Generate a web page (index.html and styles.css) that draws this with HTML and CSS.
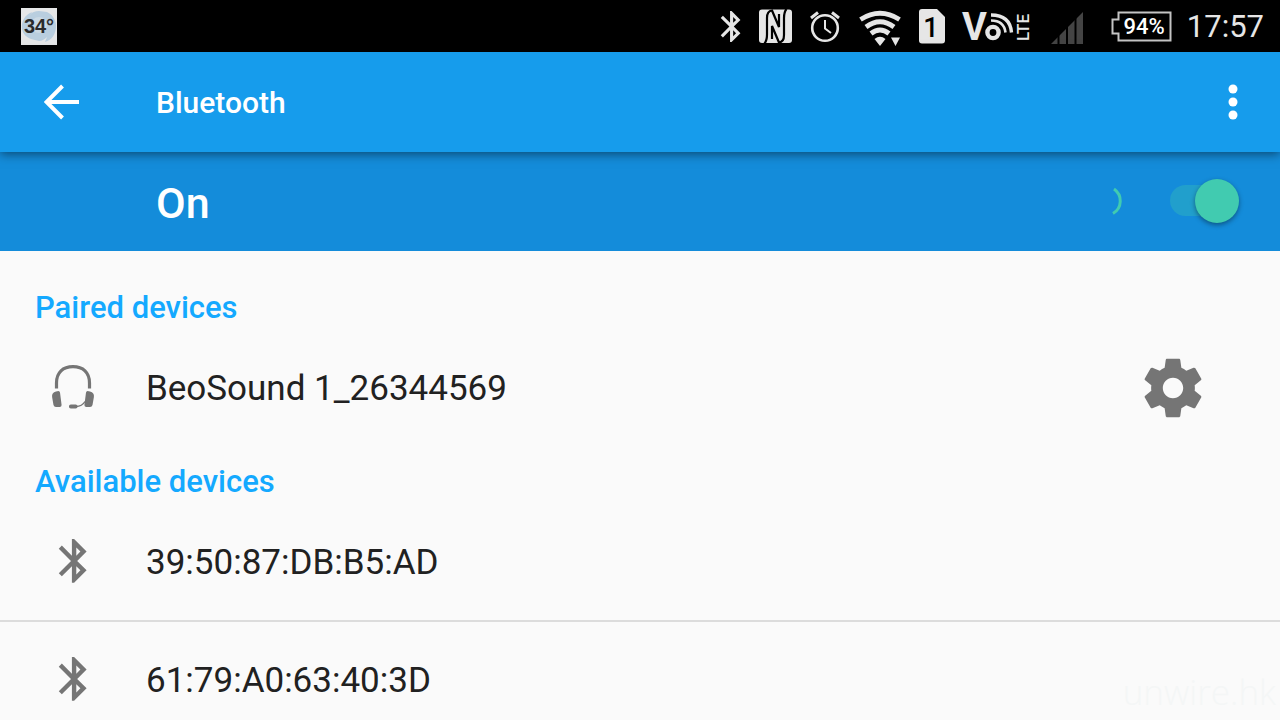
FILE: index.html
```html
<!DOCTYPE html>
<html lang="en">
<head>
<meta charset="utf-8">
<meta name="viewport" content="width=device-width, initial-scale=1">
<title>Bluetooth</title>
<link rel="stylesheet" href="styles.css">
</head>
<body>
<svg class="defs" aria-hidden="true">
  <path id="bluetooth" fill="currentColor" d="M17.710 7.710L12 2h-1v7.590L6.410 5 5 6.410 10.590 12 5 17.590 6.410 19 11 14.410V22h1l5.710-5.710L13.410 12l4.300-4.290zM13 5.830l1.880 1.880L13 9.590V5.830zm1.880 10.460L13 18.170v-3.760l1.880 1.880z"/>
</svg>
<div class="app">
  <div class="status">
    <svg class="weather" width="36" height="37" viewBox="0 0 36 37" role="img" aria-label="34 degrees">
      <rect width="36" height="37" fill="#e6e7e8"/>
      <path d="M11 4C4 7 0 13 1 21c1 5 4 8 9 10l8 2c3 0 6-2 8-4l-2 5c7-2 11-8 11-16 0-6-3-11-9-14l-8-1c-4 0-7 1-9 4l2-3z" fill="#b9cedf"/>
      <circle cx="18" cy="17" r="8" fill="#cbd9e4"/>
      <path d="M28 4q4 3 6 8V4zM2 25q3 6 8 8H2z" fill="#e6e7e8"/>
      <text x="18" y="25" text-anchor="middle" class="weather-text">34°</text>
    </svg>
    <div class="status-icons">
      <svg width="38" height="52" viewBox="0 0 38 52" aria-label="Bluetooth">
        <use href="#bluetooth" transform="translate(1 8) scale(1.550)"/>
      </svg>
      <svg width="50" height="52" viewBox="0 0 50 52" aria-label="NFC">
        <rect x="9" y="9.500" width="33" height="33.500" rx="3" fill="#e6e6e6"/>
        <path d="M14.500 43.500q2.500-3 2.500-9V18q0-7 5-7.500L29 27V14M36.500 9q-2.500 3-2.500 9v17q0 7-5 7.500L22 26v13" fill="none" stroke="#000" stroke-width="2.200"/>
      </svg>
      <svg width="50" height="52" viewBox="0 0 50 52" aria-label="Alarm">
        <g fill="none" stroke="#e6e6e6">
          <circle cx="25" cy="28" r="12.800" stroke-width="2.600"/>
          <path d="M25 20v8.500l6 4.500" stroke-width="2"/>
          <path d="M11 18l7-5.500M39 18l-7-5.500" stroke-width="3"/>
        </g>
      </svg>
      <svg width="60" height="52" viewBox="0 0 60 52" aria-label="Wi-Fi">
        <g fill="none" stroke="#e6e6e6" stroke-width="4.800">
          <path d="M10.500 19.500Q30 7 49.500 19.500"/>
          <path d="M16 27Q30 16.500 44 27"/>
          <path d="M21 33.500Q30 26.500 39 33.500"/>
        </g>
        <path d="M24.500 39Q30 34.500 35.500 39L30 46zM41 37.500h9L45.500 46z" fill="#e6e6e6"/>
      </svg>
      <svg width="44" height="52" viewBox="0 0 44 52" aria-label="SIM 1">
        <path d="M12 9h15l8 8v23.500q0 3-3 3H12q-3 0-3-3V12q0-3 3-3z" fill="#e6e6e6"/>
        <text x="21" y="37" text-anchor="middle" class="sim-text">1</text>
      </svg>
      <svg width="86" height="52" viewBox="0 0 86 52" aria-label="VoLTE">
        <text x="8" y="40" class="volte-v">V</text>
        <g fill="none" stroke="#e6e6e6">
          <circle cx="39" cy="32.500" r="5.600" stroke-width="4.400"/>
          <path d="M37 20.500q13 0 14.500 12" stroke-width="2.600"/>
          <path d="M37 15q19 0 20.500 17.500" stroke-width="3.400"/>
        </g>
        <text transform="translate(75 41) rotate(-90)" class="volte-lte">LTE</text>
      </svg>
      <svg width="58" height="52" viewBox="0 0 58 52" aria-label="Mobile signal">
        <path d="M11 44 43 12v32z" fill="#444"/>
        <path d="M35.500 12v32M27 12v32M18.500 12v32" stroke="#000" stroke-width="2"/>
      </svg>
      <svg width="82" height="52" viewBox="0 0 82 52" aria-label="Battery 94%">
        <path d="M20.500 12.500h52v28h-52v-7h-6v-14h6z" fill="none" stroke="#c4c4c4" stroke-width="2"/>
        <text x="46" y="34" text-anchor="middle" class="battery-text">94%</text>
      </svg>
      <time class="clock">17:57</time>
    </div>
  </div>

  <header class="appbar">
    <button class="back" aria-label="Back">
      <svg width="36" height="36" viewBox="0 0 36 36"><path d="M35 18H3M18.500 2 2.500 18l16 16" fill="none" stroke="#fff" stroke-width="4"/></svg>
    </button>
    <h1 class="title">Bluetooth</h1>
    <button class="more" aria-label="More options">
      <svg width="10" height="36" viewBox="0 0 10 36" fill="#fff"><circle cx="5" cy="5" r="4.500"/><circle cx="5" cy="18" r="4.500"/><circle cx="5" cy="31" r="4.500"/></svg>
    </button>
  </header>

  <div class="power">
    <label class="power-label" for="bt-switch">On</label>
    <svg class="spinner" width="32" height="32" viewBox="0 0 32 32" aria-label="Scanning"><path d="M23 4a14.500 14.500 0 0 1-1 24.500" fill="none" stroke="#41cbb0" stroke-width="3"/></svg>
    <input class="switch" id="bt-switch" type="checkbox" role="switch" checked>
  </div>

  <main class="content">
    <section>
      <h2 class="heading">Paired devices</h2>
      <ul class="devices">
        <li class="device">
          <svg class="device-icon" width="46" height="46" viewBox="0 0 46 46" fill="#757575">
            <path d="M6.500 23.500V18C6.500 7.500 13 1.700 23 1.700S39.500 7.500 39.500 18v5.500" fill="none" stroke="#757575" stroke-width="3.200"/>
            <path d="M6 26.500l2.500-.5q1.200 0 1.500 1.500l1.600 12.500q0 2-2 2H6q-2 0-2.500-2L2.100 32q-.6-4.500 3.900-5.500zM40 26.500l-2.500-.5q-1.200 0-1.500 1.500L34.400 40q0 2 2 2H40q2 0 2.500-2L43.900 32q.6-4.500-3.900-5.500z"/>
            <rect x="19" y="39.500" width="8.500" height="4" rx="1.800"/>
            <path d="M26 41.500q6 0 9-5" fill="none" stroke="#757575" stroke-width="1.400"/>
          </svg>
          <span class="device-name">BeoSound 1_26344569</span>
          <button class="settings" aria-label="Device settings">
            <svg width="70" height="70" viewBox="0 0 24 24" fill="#757575"><path d="M19.430 12.980c.04-.32.07-.64.07-.98s-.03-.66-.07-.98l2.110-1.650c.19-.15.24-.42.12-.64l-2-3.460c-.12-.22-.39-.3-.61-.22l-2.490 1c-.52-.4-1.080-.73-1.690-.98l-.38-2.650C14.460 2.180 14.250 2 14 2h-4c-.25 0-.46.18-.49.42l-.38 2.650c-.61.25-1.170.59-1.690.98l-2.490-1c-.23-.09-.49 0-.61.22l-2 3.460c-.13.22-.07.49.12.64l2.110 1.650c-.04.32-.07.65-.07.98s.03.66.07.98l-2.110 1.650c-.19.15-.24.42-.12.64l2 3.460c.12.22.39.3.61.22l2.490-1c.52.4 1.080.73 1.690.98l.38 2.650c.03.24.24.42.49.42h4c.25 0 .46-.18.49-.42l.38-2.650c.61-.25 1.170-.59 1.690-.98l2.490 1c.23.09.49 0 .61-.22l2-3.460c.12-.22.07-.49-.12-.64l-2.110-1.650zM12 15.500c-1.930 0-3.500-1.570-3.500-3.500s1.570-3.500 3.500-3.500 3.500 1.570 3.500 3.500-1.570 3.500-3.500 3.500z"/></svg>
          </button>
        </li>
      </ul>
    </section>
    <section>
      <h2 class="heading">Available devices</h2>
      <ul class="devices">
        <li class="device">
          <svg class="device-icon" width="46" height="46" viewBox="1 2 21 21"><use href="#bluetooth"/></svg>
          <span class="device-name">39:50:87:DB:B5:AD</span>
        </li>
        <li class="device">
          <svg class="device-icon" width="46" height="46" viewBox="1 2 21 21"><use href="#bluetooth"/></svg>
          <span class="device-name">61:79:A0:63:40:3D</span>
        </li>
      </ul>
    </section>
  </main>
  <div class="watermark">unwire.hk</div>
</div>
</body>
</html>
```
FILE: styles.css
```css
* { box-sizing: border-box; }

body {
  margin: 0;
  background: #fafafa;
  color: #212121;
  font-family: Roboto, "Liberation Sans", sans-serif;
}

.defs { position: absolute; width: 0; height: 0; }

.app {
  position: relative;
  display: flex;
  flex-direction: column;
  height: 100vh;
  overflow: hidden;
}

button {
  display: flex;
  padding: 0;
  border: 0;
  background: none;
  cursor: pointer;
}

/* Status bar */
.status {
  display: flex;
  flex: none;
  align-items: center;
  justify-content: space-between;
  height: 52px;
  padding: 0 16px 0 21px;
  background: #000;
}
.status-icons { display: flex; align-items: center; color: #e6e6e6; }
.weather-text { font: bold 20px "Liberation Sans", sans-serif; fill: #2b2b2b; }
.sim-text { font-size: 27px; font-weight: 500; fill: #000; }
.volte-v { font-size: 38px; font-weight: 700; fill: #e6e6e6; }
.volte-lte { font-size: 17px; font-weight: 500; fill: #e6e6e6; }
.battery-text { font-size: 22px; font-weight: 500; fill: #fff; }
.clock { padding-left: 7px; font-size: 31px; line-height: 52px; padding-top: 2px; }

/* App bar */
.appbar {
  position: relative;
  z-index: 1;
  display: flex;
  flex: none;
  align-items: center;
  height: 100px;
  padding: 0 42px 0 44px;
  background: #169cec;
  box-shadow: 0 2px 10px rgba(0, 0, 0, 0.5);
}
.back { width: 112px; }
.title { flex: 1; margin: 0; padding-top: 2px; font-size: 30px; font-weight: 500; line-height: 40px; color: #fff; }

/* Power row */
.power {
  display: flex;
  flex: none;
  align-items: center;
  height: 99px;
  padding: 0 41px 2px 156px;
  background: #148cda;
}
.power-label { flex: 1; padding-top: 4px; font-size: 43px; font-weight: 500; line-height: 56px; color: #fff; }
.spinner { margin-right: 47px; }
.switch {
  position: relative;
  width: 69px;
  height: 44px;
  margin: 0;
  appearance: none;
  cursor: pointer;
}
.switch::before {
  content: "";
  position: absolute;
  inset: 6px 8px 7px 0;
  border-radius: 16px;
  background: #219fcc;
}
.switch::after {
  content: "";
  position: absolute;
  top: 0;
  right: 0;
  width: 44px;
  height: 44px;
  border-radius: 50%;
  background: #41cbb0;
  box-shadow: 0 2px 5px rgba(0, 0, 0, 0.4);
}
.switch:not(:checked)::after { right: auto; left: 0; background: #fafafa; }

/* Device lists */
.content { flex: 1; min-height: 0; padding-top: 21px; overflow: hidden; }
.heading {
  margin: 0;
  padding: 16px 35px 2px;
  font-size: 31px;
  font-weight: 500;
  line-height: 40px;
  color: #14a9ff;
}
.devices { margin: 0; padding: 0; list-style: none; }
.device {
  display: flex;
  align-items: center;
  height: 116px;
  padding: 0 72px 0 50px;
}
.device + .device { height: 118px; border-top: 2px solid #dcdcdc; }
.device-icon { flex: none; margin-right: 50px; color: #757575; }
.device-name { flex: 1; padding-top: 2px; font-size: 35px; line-height: 48px; }

.watermark {
  position: absolute;
  right: 4px;
  bottom: 6px;
  font: 300 35px/44px "Open Sans", sans-serif;
  color: #f4f6f6;
}
```
